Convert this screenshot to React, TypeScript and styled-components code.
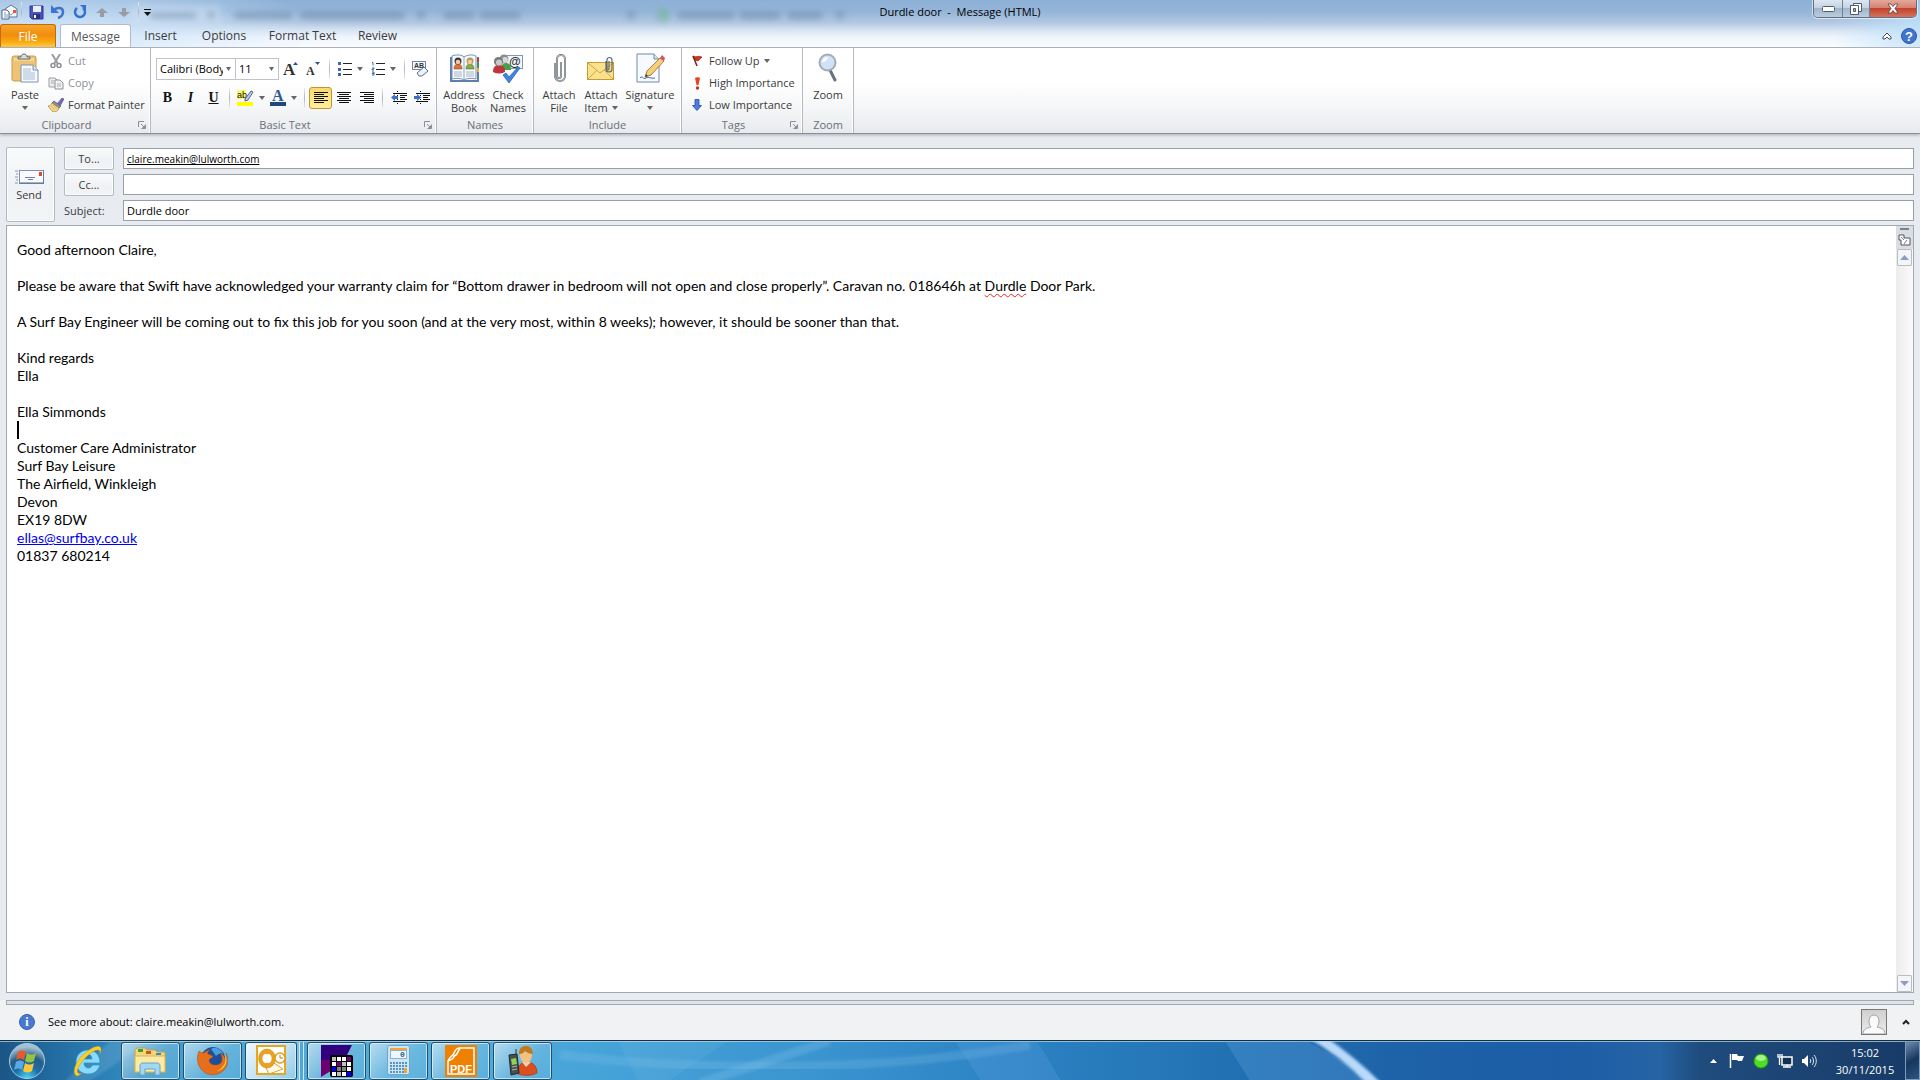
import React from "react";
import styled, { createGlobalStyle, css } from "styled-components";

const ui = `"Open Sans", "Noto Sans", sans-serif`;

const GlobalStyle = createGlobalStyle`
  *, *::before, *::after { box-sizing: border-box; }
  body { margin: 0; font-family: ${ui}; font-size: 11px; line-height: 16px; color: #3b3b3b; background: #e8ebf0; }
  button, input, select { font: inherit; color: inherit; margin: 0; }
  button { border: 0; background: none; padding: 0; }
  svg { display: block; flex: none; }
`;

const Window = styled.div`
  min-height: 100vh;
  display: flex;
  flex-direction: column;
`;

/* ---------- title bar and tabs ---------- */

const Glass = styled.header`
  position: relative;
  overflow: hidden;
  border-bottom: 1px solid #a9b0ba;
  background:
    radial-gradient(ellipse 260px 60px at 60px 30px, rgba(205, 228, 250, 0.95), rgba(205, 228, 250, 0) 100%),
    radial-gradient(ellipse 90px 60px at 100% 30px, rgba(190, 225, 250, 0.9), rgba(190, 225, 250, 0) 100%),
    linear-gradient(#8cb0d6 0, #95b5d8 12px, #b3c9e2 23px, #dbe6f3 31px, #eff5fc 37px, #fbfdff 47px);
`;

const Ghosts = styled.svg`
  position: absolute;
  left: 0;
  top: 0;
`;

const TitleRow = styled.div`
  position: relative;
  display: grid;
  grid-template-columns: 1fr auto 1fr;
  height: 24px;
`;

const QuickAccess = styled.div`
  display: flex;
  align-items: center;
  padding-left: 1px;
`;

const QuickButton = styled.button<{ $w?: number }>`
  width: ${(p) => p.$w ?? 22}px;
  height: 22px;
  display: flex;
  align-items: center;
  justify-content: center;
`;

const Title = styled.h1`
  margin: 0;
  font-size: 11px;
  line-height: 24px;
  font-weight: 400;
  color: #000;
  white-space: pre;
`;

const Caption = styled.div`
  justify-self: end;
  display: flex;
  height: 18px;
  margin-right: 3px;
  border: 1px solid #5f6f80;
  border-top: 0;
  border-radius: 0 0 5px 5px;
  overflow: hidden;
  box-shadow: 0 0 0 1px rgba(255, 255, 255, 0.6);
`;

const CaptionButton = styled.button<{ $w: number; $close?: boolean }>`
  width: ${(p) => p.$w}px;
  display: flex;
  align-items: center;
  justify-content: center;
  background: ${(p) =>
    p.$close
      ? "linear-gradient(#e3a99c 0, #d48270 8px, #c1402a 8px, #d5745f 17px)"
      : "linear-gradient(#dce7f2 0, #c3d3e3 8px, #9fb4c9 8px, #bccddd 17px)"};
  & + & { border-left: 1px solid #6f8092; }
`;

const TabRow = styled.nav`
  position: relative;
  display: flex;
  align-items: flex-end;
  height: 23px;
`;

const Tab = styled.button<{ $w: number; $kind?: "file" | "active" }>`
  width: ${(p) => p.$w}px;
  height: 23px;
  padding-top: 1px;
  font-size: 12px;
  line-height: 22px;
  border-radius: 3px 3px 0 0;
  ${(p) =>
    p.$kind === "file" &&
    css`
      color: #fff;
      margin-right: 4px;
      border: 1px solid #c76a05;
      border-bottom: 0;
      background: linear-gradient(#f7a52b, #f08c0e 45%, #f9a90f 75%, #fdc943);
    `}
  ${(p) =>
    p.$kind === "active" &&
    css`
      background: #fff;
      border: 1px solid #b6bcc5;
      border-bottom: 0;
      color: #55585c;
    `}
`;

const TabTools = styled.div`
  margin-left: auto;
  display: flex;
  align-items: center;
  gap: 9px;
  height: 23px;
  padding-right: 3px;
`;

/* ---------- ribbon ---------- */

const Ribbon = styled.section`
  display: flex;
  height: 86px;
  border-bottom: 1px solid #8b9097;
  background: linear-gradient(#fff 0, #fff 35px, #f5f6f7 60px, #e8eaee 85px);
  box-shadow: 0 1px 3px rgba(90, 98, 110, 0.45);
`;

const Group = styled.section<{ $w: number }>`
  width: ${(p) => p.$w}px;
  display: flex;
  flex-direction: column;
  border-right: 1px solid #b4b8be;
  box-shadow: inset -1px 0 #fff;
`;

const GroupBody = styled.div<{ $pad?: number }>`
  flex: 1;
  display: flex;
  padding: 2px 0 0 ${(p) => p.$pad ?? 4}px;
`;

const GroupFoot = styled.footer`
  display: flex;
  align-items: center;
  height: 17px;
  color: #6a6f77;
`;

const GroupName = styled.h2`
  flex: 1;
  margin: 0;
  font-size: 11px;
  line-height: 17px;
  font-weight: 400;
  text-align: center;
`;

const Launcher = styled.button`
  width: 17px;
  height: 14px;
  display: grid;
  place-items: center;
`;

const Big = styled.button<{ $w: number }>`
  width: ${(p) => p.$w}px;
  display: flex;
  flex-direction: column;
  align-items: center;
  padding-top: 2px;
  line-height: 13px;
  white-space: nowrap;
`;

const BigIcon = styled.span`
  display: grid;
  place-items: center;
  height: 32px;
  margin-bottom: 4px;
`;

const CaretLine = styled.span`
  display: inline-flex;
  align-items: center;
  gap: 4px;
  height: 13px;
`;

const Column = styled.div`
  display: flex;
  flex-direction: column;
`;

const Small = styled.button<{ $off?: boolean }>`
  display: flex;
  align-items: center;
  gap: 4px;
  height: 22px;
  white-space: nowrap;
  color: ${(p) => (p.$off ? "#8f9297" : "#3b3b3b")};
`;

const SmallIcon = styled.span`
  width: 16px;
  display: grid;
  place-items: center;
`;

const ToolRows = styled(Column)`
  padding-top: 7px;
  gap: 6px;
`;

const Tools = styled.div`
  display: flex;
  align-items: center;
  height: 23px;
`;

const SelectBox = styled.label<{ $w: number }>`
  position: relative;
  width: ${(p) => p.$w}px;
  height: 22px;
  border: 1px solid #c0c4ca;
  background: #fff;
  & + & { border-left: 0; }
  select {
    appearance: none;
    width: ${(p) => p.$w - 14}px;
    height: 20px;
    padding: 0 0 0 3px;
    border: 0;
    outline: 0;
    background: none;
    color: #000;
    overflow: hidden;
    text-overflow: clip;
    display: block;
  }
  svg { position: absolute; right: 4px; top: 8px; pointer-events: none; }
`;

const Tool = styled.button<{ $on?: boolean; $split?: boolean }>`
  width: ${(p) => (p.$split ? 33 : 23)}px;
  height: 22px;
  display: flex;
  align-items: center;
  justify-content: center;
  gap: 5px;
  ${(p) =>
    p.$on &&
    css`
      border: 1px solid #c2962e;
      border-radius: 3px;
      background: linear-gradient(#fbd873, #fce588 50%, #ffec9a);
    `}
`;

const Letter = styled.span<{ $italic?: boolean; $under?: boolean }>`
  font-family: "Liberation Serif", serif;
  font-size: 14px;
  font-weight: 700;
  color: #111;
  font-style: ${(p) => (p.$italic ? "italic" : "normal")};
  text-decoration: ${(p) => (p.$under ? "underline" : "none")};
`;

const Rule = styled.span<{ $gap?: number }>`
  width: 1px;
  height: 20px;
  margin: 0 ${(p) => p.$gap ?? 4}px;
  background: linear-gradient(#e8eaed, #b0b5bc 50%, #e8eaed);
`;

/* ---------- address fields ---------- */

const Envelope = styled.form`
  display: grid;
  grid-template-columns: 49px 1fr;
  column-gap: 9px;
  padding: 13px 6px 3px 6px;
`;

const raised = css`
  border: 1px solid #b4bac2;
  border-radius: 2px;
  background: linear-gradient(#f9fafc, #eff1f4 60%, #f3f4f6);
  box-shadow: inset 0 0 0 1px #fbfcfd;
`;

const Send = styled.button`
  ${raised}
  display: flex;
  flex-direction: column;
  align-items: center;
  justify-content: center;
  gap: 3px;
  padding: 3px 3px 0 0;
`;

const Fields = styled.div`
  display: flex;
  flex-direction: column;
  gap: 3px;
`;

const Field = styled.div`
  display: grid;
  grid-template-columns: 50px 1fr;
  column-gap: 9px;
  align-items: center;
  height: 23px;
`;

const FieldButton = styled.button`
  ${raised}
  height: 23px;
`;

const FieldInput = styled.input<{ $link?: boolean }>`
  width: 100%;
  height: 21px;
  padding: 0 3px;
  border: 1px solid #9a9fa7;
  outline: 0;
  background: #fff;
  color: #000;
  ${(p) =>
    p.$link &&
    css`
      font-size: 10px;
      text-decoration: underline;
    `}
`;

/* ---------- message ---------- */

const Editor = styled.main`
  flex: 1;
  display: flex;
  margin: 0 6px 7px 6px;
  border: 1px solid #a0a8b3;
  background: #fff;
`;

const Letterhead = styled.div`
  flex: 1;
  padding: 15px 10px;
  outline: 0;
  font-family: Lato, Carlito, sans-serif;
  font-size: 14px;
  line-height: 18px;
  color: #000;
  p { margin: 0; min-height: 18px; }
  a { color: #0000f0; }
`;

const Misspelt = styled.span`
  text-decoration: underline wavy #e22 1px;
  text-underline-offset: 2px;
  text-decoration-skip-ink: none;
`;

const TextCursor = styled.span`
  display: block;
  width: 2px;
  height: 18px;
  background: #000;
`;

const ScrollBar = styled.div`
  width: 17px;
  display: flex;
  flex-direction: column;
  align-items: center;
  background: linear-gradient(90deg, #ececee, #fbfbfb);
`;

const ScrollHead = styled.div`
  width: 17px;
  height: 23px;
  display: flex;
  flex-direction: column;
  align-items: center;
  gap: 3px;
  padding-top: 2px;
  background: #d9dee6;
`;

const ScrollButton = styled.button`
  width: 15px;
  height: 17px;
  display: grid;
  place-items: center;
  border: 1px solid #b9bdc3;
  border-radius: 1px;
  background: #f4f5f6;
  &:last-child { margin-top: auto; }
`;

/* ---------- people pane ---------- */

const People = styled.aside`
  background: #f1f2f4;
  padding: 0 6px;
`;

const Splitter = styled.div`
  height: 5px;
  border: 1px solid #a0a8b3;
  background: #dfe4ea;
`;

const PeopleRow = styled.div`
  display: flex;
  align-items: center;
  height: 35px;
  padding: 0 4px 2px 13px;
  gap: 13px;
  color: #000;
`;

const PeopleTools = styled.div`
  margin-left: auto;
  display: flex;
  align-items: center;
  gap: 15px;
`;

const Avatar = styled.button`
  width: 26px;
  height: 26px;
  border: 1px solid #777;
  background: linear-gradient(#cfcfcf, #ececec);
`;

/* ---------- taskbar ---------- */

const Taskbar = styled.footer`
  position: relative;
  display: flex;
  height: 40px;
  overflow: hidden;
  border-top: 1px solid #12303f;
  background: linear-gradient(90deg,
    #1a5585 0, #216a9f 50px, #2d82b8 110px, #4aa3d2 200px, #55addb 420px,
    #46a3d8 600px, #3a94cf 820px, #2d83c4 1000px, #2374b4 1200px,
    #1e62a8 1400px, #1c5da6 1560px, #2563a4 1660px, #1f4c7d 1700px, #1a3f6d 1860px, #163a66 100%);
  box-shadow: inset 0 1px rgba(190, 220, 240, 0.7);
`;

const Sheen = styled.svg`
  position: absolute;
  left: 0;
  top: 0;
`;

const Apps = styled.nav`
  position: relative;
  display: flex;
  align-items: center;
  gap: 3px;
`;

const Launch = styled.button<{ $w: number }>`
  width: ${(p) => p.$w}px;
  height: 38px;
  display: grid;
  place-items: center;
`;

const TaskButton = styled.button<{ $current?: boolean }>`
  width: 59px;
  height: 38px;
  display: grid;
  place-items: center;
  border: 1px solid #1f4f6e;
  border-radius: 3px;
  box-shadow: inset 0 0 0 1px rgba(225, 243, 252, 0.75);
  background: ${(p) =>
    p.$current
      ? "linear-gradient(135deg, #f2f9fd, #b9dff2 60%, #8ecbe9)"
      : "linear-gradient(135deg, rgba(225,242,250,.7), rgba(140,200,230,.4) 55%, rgba(100,185,225,.4))"};
`;

const Stack = styled.div`
  display: flex;
  width: 59px;
  border-right: 1px solid #cdeaf7;
  padding-right: 3px;
  ${TaskButton} { width: 52px; }
  &::after {
    content: "";
    width: 3px;
    height: 38px;
    border-right: 1px solid #cdeaf7;
    background: #7fbfe0;
  }
`;

const Tray = styled.div`
  position: relative;
  margin-left: auto;
  display: flex;
  align-items: center;
`;

const TrayButton = styled.button`
  width: 24px;
  height: 38px;
  display: grid;
  place-items: center;
`;

const Clock = styled.time`
  width: 80px;
  margin-left: 4px;
  color: #fff;
  text-align: center;
  line-height: 17px;
`;

const ShowDesktop = styled.button`
  width: 15px;
  height: 39px;
  border: 1px solid #7d9dbd;
  background: linear-gradient(150deg, #6d8cad, #16365e 50%, #2c5481);
`;

/* ---------- drawings ---------- */

const Caret = ({ w = 7, color = "#666", up = false }: { w?: number; color?: string; up?: boolean }) => (
  <svg width={w} height={w > 7 ? 5 : 4} viewBox="0 0 7 4" preserveAspectRatio="none" aria-hidden="true">
    <path d={up ? "M0 4h7L3.5 0z" : "M0 0h7L3.5 4z"} fill={color} />
  </svg>
);

const LauncherMark = () => (
  <svg width="8" height="8" viewBox="0 0 8 8" aria-hidden="true">
    <path d="M.5 6V.5H6M3.5 7.500h4v-4M3 3l3.500 3.500" fill="none" stroke="#8b8f96" />
    <path d="M4 7h3V4z" fill="#8b8f96" />
  </svg>
);

const Svg = ({ w, h, children }: { w: number; h: number; children: React.ReactNode }) => (
  <svg width={w} height={h} viewBox={`0 0 ${w} ${h}`} aria-hidden="true">{children}</svg>
);

const MailIcon = () => (
  <Svg w={17} h={16}>
    <path d="M4 5l6-4 6 4v8H4z" fill="#f3f6fa" stroke="#62758d" />
    <path d="M4 6l6 5 6-5" fill="none" stroke="#8ea0b5" />
    <rect x="12" y="6" width="3" height="3" fill="#e2592f" />
    <path d="M1 6h5l2 2v7H1z" fill="#fff" stroke="#54677e" />
    <path d="M3 9h2M3 11h4M3 13h4" stroke="#6b9bd0" />
  </Svg>
);

const SaveIcon = () => (
  <Svg w={15} h={15}>
    <path d="M1 1h13v13H3l-2-2z" fill="#4a53bd" stroke="#2f3794" />
    <rect x="4" y="1" width="8" height="6" fill="#e9eefb" />
    <path d="M4 9h7v5H4z" fill="#2c3278" />
    <rect x="5" y="10" width="2" height="3" fill="#fff" />
  </Svg>
);

const UndoIcon = () => (
  <Svg w={14} h={15}>
    <path d="M3 5c3-3 9-3 9 2 0 3-2 5-5 6" fill="none" stroke="#3d74cf" strokeWidth="2.500" />
    <path d="M0 0v8h8z" fill="#3d74cf" />
  </Svg>
);

const RedoIcon = () => (
  <Svg w={14} h={14}>
    <path d="M4 3a5 5 0 1 0 6 0" fill="none" stroke="#3470d2" strokeWidth="2.500" />
    <path d="M7 0h6v6z" fill="#3470d2" />
  </Svg>
);

const ArrowMark = ({ down }: { down?: boolean }) => (
  <Svg w={12} h={9}>
    <path d={down ? "M6 9L0 4h4V0h4v4h4z" : "M6 0l6 5H8v4H4V5H0z"} fill="#9a9ca3" />
  </Svg>
);

const PasteIcon = () => (
  <Svg w={28} h={31}>
    <rect x="1" y="3" width="24" height="25" rx="2" fill="#eec376" stroke="#c99a48" />
    <path d="M3 5h20v3H3z" fill="#f5d592" />
    <path d="M7 6V4h3c0-4 6-4 6 0h3v2z" fill="#d9dde2" stroke="#666d75" />
    <path d="M10 12h12l5 5v12H10z" fill="#f7faff" stroke="#7b92b0" />
    <path d="M22 12v5h5" fill="#dbe5f2" stroke="#7b92b0" />
    <path d="M12 16h8M12 18h8M12 20h12M12 22h12M12 24h12M12 26h12" stroke="#a9bcd5" />
  </Svg>
);

const CutIcon = () => (
  <Svg w={12} h={15}>
    <path d="M2 0l6 10M10 0L4 10" stroke="#9a9da2" strokeWidth="2" />
    <circle cx="3" cy="11.500" r="2" fill="none" stroke="#8c8f94" strokeWidth="1.500" />
    <circle cx="9" cy="11.500" r="2" fill="none" stroke="#8c8f94" strokeWidth="1.500" />
  </Svg>
);

const CopyIcon = () => (
  <Svg w={16} h={13}>
    <path d="M1 1h6l2 2v7H1z" fill="#ededed" stroke="#9a9da2" />
    <path d="M7 3h5l3 3v6H7z" fill="#f3f3f3" stroke="#8c8f94" />
    <path d="M9 7h4M9 9h4M3 4h3M3 6h3" stroke="#a9abaf" />
  </Svg>
);

const PainterIcon = () => (
  <Svg w={16} h={14}>
    <path d="M9 6l5-6 2 1-4 7z" fill="#7c6bb2" stroke="#4e4778" strokeWidth=".6" />
    <path d="M6 3l7 5-2 2-7-5z" fill="#8d8aa8" stroke="#55536e" strokeWidth=".7" />
    <path d="M4 5l7 5c-1 3-3 4-6 4L0 8c2 0 3-1 4-3z" fill="#f5dc95" stroke="#a87d1f" strokeWidth=".7" />
    <path d="M3 8l4 4M5 7l4 4" stroke="#c9a04a" strokeWidth=".7" />
  </Svg>
);

const FontSize = ({ grow }: { grow?: boolean }) => (
  <Svg w={15} h={16}>
    <text x="0" y="14" fontFamily="Liberation Serif, serif" fontWeight="700" fontSize={grow ? 17 : 12} fill="#333">A</text>
    <path d={grow ? "M10 4h5l-2.500-3z" : "M9 1h5l-2.500 3z"} fill="#2b4f91" />
  </Svg>
);

const ListIcon = ({ numbered }: { numbered?: boolean }) => (
  <Svg w={14} h={14}>
    <path d="M5 1.500h9M5 7.500h9M5 12.500h9" stroke="#222" />
    {numbered ? (
      <path d="M1 .5h1v3M1 6h2v1H1v1h2M1 10h2v3H1M1 11.500h2" fill="none" stroke="#3d66ad" />
    ) : (
      <path d="M0 0h3v3H0zM0 6h3v3H0zM0 11h3v3H0z" fill="#3d66ad" />
    )}
  </Svg>
);

const ClearIcon = () => (
  <Svg w={17} h={16}>
    <rect x=".5" y=".5" width="13" height="8" fill="#f6f9fd" stroke="#6b87ac" />
    <text x="2" y="7" fontFamily="Liberation Sans, sans-serif" fontWeight="700" fontSize="7" fill="#333">AB</text>
    <path d="M5 12l7-6 4 4-6 5H7z" fill="#eef2f8" stroke="#5b6f8c" />
  </Svg>
);

const HighlightIcon = () => (
  <Svg w={17} h={16}>
    <rect width="9" height="9" fill="#fdf76a" />
    <text x="0" y="8" fontFamily="Liberation Sans, sans-serif" fontSize="9" fill="#111">ab</text>
    <path d="M8 9l6-8 2 1-5 8-3 1z" fill="#b9cdea" stroke="#51688c" />
    <rect y="12" width="16" height="4" fill="#ffff00" />
  </Svg>
);

const FontColorIcon = () => (
  <Svg w={16} h={16}>
    <text x="2" y="11" fontFamily="Liberation Serif, serif" fontWeight="700" fontSize="16" fill="#2b579a">A</text>
    <rect y="12" width="16" height="4" fill="#1f497d" />
  </Svg>
);

const AlignIcon = ({ side }: { side: "left" | "center" | "right" }) => {
  const short = side === "left" ? "M0" : side === "center" ? "M2" : "M4";
  return (
    <Svg w={14} h={12}>
      <path d="M0 .5h14M0 4.500h14M0 8.500h14" stroke="#111" />
      <path d={`${short} 2.500h10${short} 6.500h10${short} 10.500h10`} stroke="#111" />
    </Svg>
  );
};

const IndentIcon = ({ more }: { more?: boolean }) => (
  <Svg w={16} h={14}>
    <path d="M2 2.500h14M9 4.500h7M9 6.500h5M9 8.500h7M2 10.500h12" stroke="#111" />
    <path d="M6.500 0v14" stroke="#111" strokeDasharray="1 1" />
    <path d={more ? "M0 5h3V3l4 3.500L3 10V8H0z" : "M7 5H4V3L0 6.500 4 10V8h3z"} fill="#3a70c8" />
  </Svg>
);

const Bust = ({ x, y, shirt, hair }: { x: number; y: number; shirt: string; hair: string }) => (
  <g transform={`translate(${x} ${y})`}>
    <path d="M0 12c0-4 2-5 4-5s4 1 4 5z" fill={shirt} stroke="#5a4a3a" strokeWidth=".5" />
    <circle cx="4" cy="4" r="3.500" fill={hair} />
    <circle cx="4" cy="5" r="2.300" fill="#efc9a5" />
  </g>
);

const AddressIcon = () => (
  <Svg w={31} h={29}>
    <path d="M1 3h2v23h25V3h2v25H1z" fill="#5c7fac" />
    <path d="M3 2c5-2 10-1 12 1 3-2 8-3 12-1v23c-4-1-9-1-12 1-3-2-8-2-12-1z" fill="#f6f9fd" stroke="#7591b5" />
    <path d="M15 3v23" stroke="#8fa5c2" />
    <Bust x={5} y={3} shirt="#e8722a" hair="#43352c" />
    <Bust x={17} y={3} shirt="#7cb342" hair="#b89a4e" />
    <path d="M5 18h8M5 20h8M5 22h8M17 18h8M17 20h8M17 22h8" stroke="#a8b5c7" />
    <path d="M28 4h2v4h-2z" fill="#d03030" />
    <path d="M28 9h2v4h-2z" fill="#3a9a3a" />
    <path d="M28 14h2v4h-2z" fill="#e4b02e" />
  </Svg>
);

const CheckNamesIcon = () => (
  <Svg w={32} h={29}>
    <rect x="14.500" y="1.500" width="16" height="13" fill="#f4f7fb" stroke="#8298b5" />
    <text x="17" y="12" fontFamily="Liberation Sans, sans-serif" fontSize="12" fontWeight="700" fill="#333">@</text>
    <path d="M9 16c0-5 2-7 5-7s5 2 5 7z" fill="#46a048" />
    <circle cx="12" cy="5" r="4.500" fill="#8b8d90" />
    <circle cx="13" cy="6" r="3" fill="#d5d7d9" />
    <path d="M1 18c0-6 3-7 6-7s6 1 6 7c-4 2-8 2-12 0z" fill="#c0353a" />
    <circle cx="6.500" cy="7.500" r="4.500" fill="#77797d" />
    <circle cx="7" cy="8.500" r="3" fill="#c8cacc" />
    <path d="M11 21l3-2 3 4 9-10 2 1-11 15z" fill="#3f86e0" stroke="#1f58ab" strokeWidth=".7" />
  </Svg>
);

const clipPath = "M8 9v14a2 2 0 0 1-4 0V6a4 4 0 0 1 8 0v17a5 5 0 0 1-10 0V10";

const ClipIcon = () => (
  <Svg w={13} h={30}>
    <path d={clipPath} fill="none" stroke="#6d7278" strokeWidth="2" />
    <path d={clipPath} fill="none" stroke="#c9cdd1" strokeWidth=".8" />
  </Svg>
);

const AttachItemIcon = () => (
  <Svg w={28} h={26}>
    <rect x=".5" y="7.500" width="26" height="17" fill="#fae28c" stroke="#c69b31" />
    <path d="M1 8l12 10L26 8M1 24l9-9M26 24l-9-9" fill="none" stroke="#d4a742" />
    <path d="M22 6v8a1 1 0 0 1-2 0V5a2 2 0 0 1 5 0v9a3 3 0 0 1-6 0V6" fill="none" stroke="#5d6875" strokeWidth="1.200" />
  </Svg>
);

const SignatureIcon = () => (
  <Svg w={29} h={30}>
    <path d="M1 1h17l5 5v23H1z" fill="#f7faff" stroke="#6e88ab" />
    <path d="M18 1v5h5" fill="#d8e3f1" stroke="#6e88ab" />
    <path d="M4 25c3-3 3 2 6 0s4 1 9 0" fill="none" stroke="#3766b4" />
    <path d="M9 24l2-6L24 5l4 3-13 14z" fill="#f6cf7a" stroke="#94661c" strokeWidth=".8" />
    <path d="M9 24l1-3 2 2z" fill="#4a4038" />
    <path d="M24 5l2-3 3 3-1 3z" fill="#d5526a" />
  </Svg>
);

const FlagIcon = () => (
  <Svg w={11} h={12}>
    <path d="M1 1c3 2 5-1 9 1L6 6 3 5z" fill="#d6301d" stroke="#8f1c10" strokeWidth=".6" />
    <path d="M1 1l4 10" stroke="#7a2018" strokeWidth="1.500" />
  </Svg>
);

const HighIcon = () => (
  <Svg w={7} h={13}>
    <path d="M1 1c1-1 4-1 5 0L4.500 8h-2z" fill="#e8431f" />
    <circle cx="3.500" cy="11" r="1.700" fill="#c9301a" />
  </Svg>
);

const LowIcon = () => (
  <Svg w={10} h={12}>
    <path d="M3 .5h4v6h2.500L5 11.500.5 6.500H3z" fill="#4c7de0" stroke="#2449a3" strokeWidth=".8" />
  </Svg>
);

const ZoomIcon = () => (
  <Svg w={20} h={30}>
    <path d="M12 17l5 10" stroke="#6d7278" strokeWidth="3" strokeLinecap="round" />
    <circle cx="9.500" cy="9.500" r="8" fill="#cfe2f6" stroke="#a3abb5" strokeWidth="2" />
    <path d="M4 9a6 6 0 0 1 6-5c-1 4-3 5-6 5z" fill="#fff" />
  </Svg>
);

const SendIcon = () => (
  <Svg w={29} h={14}>
    <path d="M0 1h3M1 4h2M0 7h3M1 10h2M0 13h3" stroke="#8595ae" />
    <rect x="4.500" y=".5" width="24" height="13" fill="#f8fafd" stroke="#7d92b3" />
    <path d="M5 13h24V1" fill="none" stroke="#4e6890" />
    <path d="M10 7.500h10M13 9.500h5" stroke="#6f82a3" />
    <rect x="24" y="2" width="3" height="4" fill="#dd4a2a" />
  </Svg>
);

const Orb = () => (
  <Svg w={38} h={38}>
    <defs>
      <radialGradient id="orb" cx=".5" cy="1" r=".9">
        <stop offset="0" stopColor="#4fd8ff" />
        <stop offset=".4" stopColor="#1c6ea8" />
        <stop offset=".7" stopColor="#255d86" />
        <stop offset="1" stopColor="#a5c0d2" />
      </radialGradient>
    </defs>
    <circle cx="19" cy="19" r="17.500" fill="url(#orb)" stroke="#a9cde3" />
    <path d="M10 10c3-2 5-2 8 0l-2 8c-3-2-5-2-8 0z" fill="#e8592b" />
    <path d="M19 11c3 2 6 2 9 0l-2 8c-3 2-6 2-9 0z" fill="#94c444" />
    <path d="M8 20c3-2 5-2 8 0l-2 8c-3-2-5-2-8 0z" fill="#5aa8e6" />
    <path d="M17 21c3 2 6 2 9 0l-2 8c-3 2-6 2-9 0z" fill="#fbc734" />
  </Svg>
);

const IeIcon = () => (
  <Svg w={32} h={32}>
    <path d="M28 20c-2 6-6 9-12 9C9 29 4 24 4 17S9 5 16 5s12 5 12 13H12c0 3 2 5 4.500 5 2 0 3-1 4-3zM12 14h8c0-3-2-4.500-4-4.500S12 11 12 14z" fill="#8adbfa" stroke="#2a92ce" strokeWidth=".7" />
    <path d="M5 31C-1 29 3 16 13 8S29 0 29 4c0 2 0 3-1 5 1-4-2-6-9-1S3 24 6 28c1 1 3 1 4 0-2 2-4 3-5 3z" fill="#f6cf2b" stroke="#c48c12" strokeWidth=".4" />
  </Svg>
);

const FolderIcon = () => (
  <Svg w={33} h={30}>
    <path d="M1 4l2-2h8l2 2h8l2 2h8v20H1z" fill="#f3d878" stroke="#c5a243" />
    <path d="M4 3h5v3H4z" fill="#3a9b4e" />
    <path d="M12 5h5v3h-5z" fill="#d45030" />
    <path d="M22 7h5v2h-5z" fill="#3a86cf" />
    <path d="M1 10h30v16H1z" fill="#fbeaa4" stroke="#d2b459" />
    <path d="M6 29V20c0-2 1-3 3-3h14c2 0 3 1 3 3v9h-5v-6H11v6z" fill="#a4d8f2" stroke="#5da6cf" />
  </Svg>
);

const FoxIcon = () => (
  <Svg w={31} h={32}>
    <circle cx="16" cy="14" r="12" fill="#1d4f9c" />
    <path d="M14 4c4-3 10 0 12 5-3-1-5 0-7 2z" fill="#4aa0dd" />
    <path d="M2 6c1 1 3 2 5 2 2-2 4-3 6-3-2 1-3 3-2 4l5 2c0 2-3 2-4 4 0 2 2 5 6 5s7-2 7-5c0-3 0-5-2-7 5 2 6 7 5 11 2-3 2-8 1-11 3 6 2 14-3 18-6 5-15 5-20 0C-1 20 0 11 2 6z" fill="#e66f1c" stroke="#b6450d" strokeWidth=".5" />
    <path d="M28 9c2 7-1 14-8 17 8-1 12-10 8-17z" fill="#ffd23f" />
  </Svg>
);

const OutlookIcon = () => (
  <Svg w={30} h={31}>
    <rect x="1" y="1" width="28" height="28" fill="#fff" stroke="#e8a51e" strokeWidth="2" />
    <path d="M9 21l9-3 9 6-14 5z" fill="#fffbe8" stroke="#dba12d" />
    <path fillRule="evenodd" d="M11 4a8 9 0 1 0 0 19 8 9 0 1 0 0-19zm0 5a3.500 5 0 1 1 0 9 3.500 5 0 1 1 0-9z" fill="#eda21c" stroke="#c57b0a" strokeWidth=".5" />
    <circle cx="24" cy="13" r="5" fill="#fff" stroke="#e09b1f" strokeWidth="1.500" />
    <path d="M24 10v3h3" fill="none" stroke="#c57b0a" />
  </Svg>
);

const cells = ["#c0c0c0", "#fff", "#fff", "#800080", "#fff", "#800080", "#c0c0c0", "#fff", "#00f", "#808080", "#808080", "#fff", "#fff", "#c0c0c0", "#fff", "#00f"];

const GridIcon = () => (
  <Svg w={32} h={32}>
    <path d="M0 0h31L22 18H0z" fill="#32007c" />
    <path d="M0 15h13v9L0 32z" fill="#6d0070" />
    <rect x="9" y="10" width="23" height="22" rx="2" fill="#000" />
    {cells.map((fill, i) => (
      <rect key={i} x={11 + (i % 4) * 5} y={12 + Math.floor(i / 4) * 5} width="4" height="4" fill={fill} />
    ))}
  </Svg>
);

const CalcIcon = () => (
  <Svg w={24} h={31}>
    <rect x=".5" y=".5" width="22" height="29" rx="2" fill="#cde6f5" stroke="#6fa6c9" />
    <rect x="3" y="3" width="17" height="2" fill="#f2a43a" />
    <rect x="3.500" y="5.500" width="16" height="8" fill="#eef7fc" stroke="#8ab4cf" />
    <text x="13" y="12" fontFamily="Liberation Mono, monospace" fontWeight="700" fontSize="8" fill="#2b5b83">0</text>
    {[0, 1, 2, 3].map((r) => (
      <path key={r} d={`M3 ${18 + r * 3}h17`} stroke="#5b93bb" strokeWidth="2" strokeDasharray="2 1" />
    ))}
    <rect x="17" y="23" width="3" height="5" fill="#f2a43a" />
  </Svg>
);

const PdfIcon = () => (
  <Svg w={32} h={32}>
    <rect width="32" height="32" rx="1" fill="#f08000" />
    <path d="M3 29V16C6 9 8 12 9 8c2-5 4-5 6-5h14v26z" fill="none" stroke="#fff" strokeWidth="1.500" />
    <path d="M3 16c4-2 6-2 6-5 3 0 3-3 6-8" fill="none" stroke="#fff" strokeWidth="1.500" />
    <text x="5" y="28" fontFamily="Liberation Sans, sans-serif" fontWeight="700" fontSize="11" fill="#fff">PDF</text>
  </Svg>
);

const PhoneIcon = () => (
  <Svg w={31} h={31}>
    <path d="M11 29c-1-8 3-12 9-12s10 4 10 11c-5 3-13 3-19 1z" fill="#dc4f1e" stroke="#9e3009" strokeWidth=".6" />
    <path d="M15 17l4 5 5-5z" fill="#f5d7b5" />
    <ellipse cx="19" cy="10" rx="6" ry="8" fill="#f4c084" />
    <path d="M12 9c0-6 3-8 7-8s7 3 7 8c-3 0-6-1-8-3-1 2-3 3-6 3z" fill="#c07a1a" />
    <path d="M2 10l8-1 2 19-8 2z" fill="#46504f" stroke="#20282a" />
    <path d="M4 14l5-1 1 6-5 1z" fill="#8fd24c" />
    <path d="M5 22l5-1M5 25l5-1" stroke="#aab4b4" />
    <path d="M9 4v5" stroke="#333" />
  </Svg>
);

const TrayFlag = () => (
  <Svg w={16} h={15}>
    <path d="M1.500 1v14" stroke="#fff" strokeWidth="1.500" />
    <path d="M3 1h5l1 2h6l-2 5H9L8 7H3z" fill="#fff" />
  </Svg>
);

const TrayNet = () => (
  <Svg w={16} h={15}>
    <rect x="5" y="4" width="10" height="8" fill="#12304f" stroke="#fff" strokeWidth="1.500" />
    <path d="M6 14h8M10 12v2M2.500 5v7M1 1v3h4V1M3 1v2" stroke="#fff" strokeWidth="1.300" fill="none" />
  </Svg>
);

const TraySound = () => (
  <Svg w={16} h={14}>
    <path d="M1 5h2l4-4v12L3 9H1z" fill="#fff" />
    <path d="M9 5c1 1 1 3 0 4M11 3c2 2 2 6 0 8M13 1c3 3 3 9 0 12" fill="none" stroke="#dce8f3" />
  </Svg>
);

const Green = () => (
  <Svg w={16} h={16}>
    <circle cx="8" cy="8" r="7" fill="#4fdc26" stroke="#2d9d12" />
    <ellipse cx="8" cy="5" rx="5" ry="3" fill="#a4f58a" />
  </Svg>
);

const ghosts = [
  [150, 46], [234, 58], [300, 104], [444, 30], [480, 40], [678, 56], [740, 40], [788, 34],
];

/* ---------- page ---------- */

const Foot = ({ name, launcher }: { name: string; launcher?: boolean }) => (
  <GroupFoot>
    <GroupName>{name}</GroupName>
    {launcher && <Launcher aria-label={`${name} options`}><LauncherMark /></Launcher>}
  </GroupFoot>
);

export default function App() {
  return (
    <Window>
      <GlobalStyle />
      <Glass>
        <Ghosts width="1920" height="47" aria-hidden="true">
          <defs><filter id="soft" x="-20%" y="-100%" width="140%" height="300%"><feGaussianBlur stdDeviation="3" /></filter></defs>
          <g filter="url(#soft)">
            <path d="M130 6h90v18h-90z" fill="#cfe2f5" opacity=".5" />
            {ghosts.map(([x, w]) => <rect key={x} x={x} y="12" width={w} height="7" fill="#4e6d8e" opacity=".38" />)}
            <circle cx="663" cy="15" r="7" fill="#6fb59b" opacity=".6" />
            {[211, 421, 631, 840].map((x) => <circle key={x} cx={x} cy="15" r="4" fill="#4e6d8e" opacity=".4" />)}
          </g>
        </Ghosts>
        <TitleRow>
          <QuickAccess>
            <MailIcon />
            <Rule $gap={3} />
            <QuickButton aria-label="Save"><SaveIcon /></QuickButton>
            <QuickButton aria-label="Undo"><UndoIcon /></QuickButton>
            <QuickButton aria-label="Redo"><RedoIcon /></QuickButton>
            <QuickButton aria-label="Previous item"><ArrowMark /></QuickButton>
            <QuickButton aria-label="Next item"><ArrowMark down /></QuickButton>
            <Rule $gap={3} />
            <QuickButton $w={11} aria-label="Customise toolbar">
              <Svg w={7} h={7}><path d="M0 .5h7" stroke="#111" /><path d="M0 3h7L3.500 7z" fill="#111" /></Svg>
            </QuickButton>
          </QuickAccess>
          <Title>{"Durdle door  -  Message (HTML)"}</Title>
          <Caption>
            <CaptionButton $w={28} aria-label="Minimise">
              <Svg w={13} h={6}><rect x=".5" y=".5" width="12" height="5" rx="1" fill="#fff" stroke="#4d5d6e" /></Svg>
            </CaptionButton>
            <CaptionButton $w={27} aria-label="Restore">
              <Svg w={12} h={12}>
                <path d="M3.500 .5h8v8h-8z" fill="#fff" stroke="#4d5d6e" />
                <path d="M.5 2.500h8v9h-8z" fill="#fff" stroke="#4d5d6e" />
                <path d="M3.500 5.500h2v3h-2z" fill="#9fb4c9" stroke="#4d5d6e" />
              </Svg>
            </CaptionButton>
            <CaptionButton $w={47} $close aria-label="Close">
              <Svg w={12} h={11}>
                <path d="M1 1h3l2 2.500L8 1h3L8 5.500l3 4.500H8L6 7.500 4 10H1l3-4.500z" fill="#fff" stroke="#5a3a3c" strokeWidth=".8" />
              </Svg>
            </CaptionButton>
          </Caption>
        </TitleRow>
        <TabRow>
          <Tab $w={56} $kind="file">File</Tab>
          <Tab $w={71} $kind="active">Message</Tab>
          <Tab $w={59}>Insert</Tab>
          <Tab $w={68}>Options</Tab>
          <Tab $w={89}>Format Text</Tab>
          <Tab $w={61}>Review</Tab>
          <TabTools>
            <button aria-label="Minimise the ribbon">
              <Svg w={10} h={8}><path d="M1 5l4-4 4 4v2H7L5 5 3 7H1z" fill="#fff" stroke="#444b54" /></Svg>
            </button>
            <button aria-label="Help">
              <Svg w={16} h={16}>
                <circle cx="8" cy="8" r="7.500" fill="#3f74cf" stroke="#2c56a5" />
                <text x="8" y="13" textAnchor="middle" fontFamily="Liberation Sans, sans-serif" fontWeight="700" fontSize="13" fill="#fff">?</text>
              </Svg>
            </button>
          </TabTools>
        </TabRow>
      </Glass>

      <Ribbon>
        <Group $w={151}>
          <GroupBody $pad={2}>
            <Big $w={46}><BigIcon><PasteIcon /></BigIcon>Paste<CaretLine><Caret w={6} /></CaretLine></Big>
            <Column>
              <Small $off><SmallIcon><CutIcon /></SmallIcon>Cut</Small>
              <Small $off><SmallIcon><CopyIcon /></SmallIcon>Copy</Small>
              <Small><SmallIcon><PainterIcon /></SmallIcon>Format Painter</Small>
            </Column>
          </GroupBody>
          <Foot name="Clipboard" launcher />
        </Group>

        <Group $w={286}>
          <GroupBody $pad={5}>
            <ToolRows>
              <Tools>
                <SelectBox $w={80}>
                  <select aria-label="Font" defaultValue="Calibri (Body)"><option>Calibri (Body)</option></select>
                  <Caret w={5} />
                </SelectBox>
                <SelectBox $w={43}>
                  <select aria-label="Font size" defaultValue="11"><option>11</option></select>
                  <Caret w={5} />
                </SelectBox>
                <Tool aria-label="Grow font"><FontSize grow /></Tool>
                <Tool aria-label="Shrink font"><FontSize /></Tool>
                <Rule />
                <Tool $split aria-label="Bullets"><ListIcon /><Caret w={6} /></Tool>
                <Tool $split aria-label="Numbering"><ListIcon numbered /><Caret w={6} /></Tool>
                <Rule />
                <Tool aria-label="Clear formatting"><ClearIcon /></Tool>
              </Tools>
              <Tools>
                <Tool aria-label="Bold"><Letter>B</Letter></Tool>
                <Tool aria-label="Italic"><Letter $italic>I</Letter></Tool>
                <Tool aria-label="Underline"><Letter $under>U</Letter></Tool>
                <Rule />
                <Tool $split aria-label="Highlight colour"><HighlightIcon /><Caret w={6} /></Tool>
                <Tool $split aria-label="Font colour"><FontColorIcon /><Caret w={6} /></Tool>
                <Rule />
                <Tool $on aria-label="Align left"><AlignIcon side="left" /></Tool>
                <Tool aria-label="Centre"><AlignIcon side="center" /></Tool>
                <Tool aria-label="Align right"><AlignIcon side="right" /></Tool>
                <Rule />
                <Tool aria-label="Decrease indent"><IndentIcon /></Tool>
                <Tool aria-label="Increase indent"><IndentIcon more /></Tool>
              </Tools>
            </ToolRows>
          </GroupBody>
          <Foot name="Basic Text" launcher />
        </Group>

        <Group $w={97}>
          <GroupBody>
            <Big $w={46}><BigIcon><AddressIcon /></BigIcon>Address<br />Book</Big>
            <Big $w={42}><BigIcon><CheckNamesIcon /></BigIcon>Check<br />Names</Big>
          </GroupBody>
          <Foot name="Names" />
        </Group>

        <Group $w={148}>
          <GroupBody>
            <Big $w={42}><BigIcon><ClipIcon /></BigIcon>Attach<br />File</Big>
            <Big $w={42}><BigIcon><AttachItemIcon /></BigIcon>Attach<CaretLine>Item<Caret w={6} /></CaretLine></Big>
            <Big $w={56}><BigIcon><SignatureIcon /></BigIcon>Signature<CaretLine><Caret w={6} /></CaretLine></Big>
          </GroupBody>
          <Foot name="Include" />
        </Group>

        <Group $w={121}>
          <GroupBody $pad={7}>
            <Column>
              <Small><SmallIcon><FlagIcon /></SmallIcon>Follow Up<Caret w={6} /></Small>
              <Small><SmallIcon><HighIcon /></SmallIcon>High Importance</Small>
              <Small><SmallIcon><LowIcon /></SmallIcon>Low Importance</Small>
            </Column>
          </GroupBody>
          <Foot name="Tags" launcher />
        </Group>

        <Group $w={51}>
          <GroupBody>
            <Big $w={42}><BigIcon><ZoomIcon /></BigIcon>Zoom</Big>
          </GroupBody>
          <Foot name="Zoom" />
        </Group>
      </Ribbon>

      <Envelope onSubmit={(e) => e.preventDefault()}>
        <Send type="submit"><SendIcon />Send</Send>
        <Fields>
          <Field>
            <FieldButton type="button">To...</FieldButton>
            <FieldInput $link aria-label="To" defaultValue="claire.meakin@lulworth.com" spellCheck={false} />
          </Field>
          <Field>
            <FieldButton type="button">Cc...</FieldButton>
            <FieldInput aria-label="Cc" />
          </Field>
          <Field>
            <label htmlFor="subject">Subject:</label>
            <FieldInput id="subject" defaultValue="Durdle door" spellCheck={false} />
          </Field>
        </Fields>
      </Envelope>

      <Editor>
        <Letterhead role="textbox" aria-label="Message" aria-multiline="true" contentEditable suppressContentEditableWarning spellCheck={false}>
          <p>Good afternoon Claire,</p>
          <p />
          <p>
            Please be aware that Swift have acknowledged your warranty claim for “Bottom drawer in bedroom will not open and
            close properly”. Caravan no. 018646h at <Misspelt>Durdle</Misspelt> Door Park.
          </p>
          <p />
          <p>A Surf Bay Engineer will be coming out to fix this job for you soon (and at the very most, within 8 weeks); however, it should be sooner than that.</p>
          <p />
          <p>Kind regards</p>
          <p>Ella</p>
          <p />
          <p>Ella Simmonds</p>
          <p><TextCursor /></p>
          <p>Customer Care Administrator</p>
          <p>Surf Bay Leisure</p>
          <p>The Airfield, Winkleigh</p>
          <p>Devon</p>
          <p>EX19 8DW</p>
          <p><a href="mailto:ellas@surfbay.co.uk">ellas@surfbay.co.uk</a></p>
          <p>01837 680214</p>
        </Letterhead>
        <ScrollBar>
          <ScrollHead>
            <Svg w={9} h={2}><rect width="9" height="2" fill="#7b818a" /></Svg>
            <Svg w={13} h={13}>
              <path d="M1 2h5v3h6v7H3V7H1z" fill="#fff" stroke="#555" />
              <path d="M3 4l3 3M9 7l-3 4" stroke="#8a6f80" />
            </Svg>
          </ScrollHead>
          <ScrollButton aria-label="Scroll up"><Caret w={9} color="#8f9cc4" up /></ScrollButton>
          <ScrollButton aria-label="Scroll down"><Caret w={9} color="#8f9cc4" /></ScrollButton>
        </ScrollBar>
      </Editor>

      <People>
        <Splitter />
        <PeopleRow>
          <Svg w={16} h={16}>
            <circle cx="8" cy="8" r="7.500" fill="#4a78d0" stroke="#3a62b4" />
            <text x="8" y="12" textAnchor="middle" fontFamily="Liberation Serif, serif" fontWeight="700" fontSize="12" fill="#fff">i</text>
          </Svg>
          <span>See more about: claire.meakin@lulworth.com.</span>
          <PeopleTools>
            <Avatar aria-label="Contact picture">
              <Svg w={24} h={24}>
                <path d="M1 24c0-5 4-6 8-7-3-3-3-12 3-12s6 9 3 12c4 1 8 2 8 7z" fill="#fafafa" stroke="#a3a3a3" />
              </Svg>
            </Avatar>
            <button aria-label="Expand people pane">
              <Svg w={8} h={6}><path d="M1 5l3-3 3 3" fill="none" stroke="#222" strokeWidth="2" /></Svg>
            </button>
          </PeopleTools>
        </PeopleRow>
      </People>

      <Taskbar>
        <Sheen width="1920" height="40" aria-hidden="true">
          <defs><filter id="haze"><feGaussianBlur stdDeviation="1.500" /></filter></defs>
          <path d="M618 0h110l-60 40h-30z" fill="#fff" opacity=".05" />
          <path d="M560 14c120 14 300 20 470-10" fill="none" stroke="#8fcaf0" strokeWidth="9" opacity=".22" filter="url(#haze)" />
          <path d="M830 0L700 42" stroke="#8fcaf0" strokeWidth="9" opacity=".25" filter="url(#haze)" />
          <path d="M955 0h82l24 40h-80z" fill="#6db0ea" opacity=".2" />
          <path d="M1225 0h82l70 40h-127z" fill="#6db0ea" opacity=".25" />
          <path d="M1303-6l20 0q32 22 58 48h-15q-26-28-63-48z" fill="#b9dafa" filter="url(#haze)" />
          <path d="M65 40L110 0h40l-60 40z" fill="#9fd0ec" opacity=".2" filter="url(#haze)" />
        </Sheen>
        <Apps>
          <Launch $w={54} aria-label="Start"><Orb /></Launch>
          <Launch $w={61} aria-label="Internet Explorer"><IeIcon /></Launch>
          <TaskButton aria-label="Windows Explorer"><FolderIcon /></TaskButton>
          <TaskButton aria-label="Firefox"><FoxIcon /></TaskButton>
          <Stack><TaskButton $current aria-label="Outlook"><OutlookIcon /></TaskButton></Stack>
          <TaskButton aria-label="Service desk"><GridIcon /></TaskButton>
          <TaskButton aria-label="Calculator"><CalcIcon /></TaskButton>
          <TaskButton aria-label="PDF reader"><PdfIcon /></TaskButton>
          <TaskButton aria-label="Phone"><PhoneIcon /></TaskButton>
        </Apps>
        <Tray>
          <TrayButton aria-label="Show hidden icons"><Caret w={7} color="#fff" up /></TrayButton>
          <TrayButton aria-label="Action centre"><TrayFlag /></TrayButton>
          <TrayButton aria-label="Status"><Green /></TrayButton>
          <TrayButton aria-label="Network"><TrayNet /></TrayButton>
          <TrayButton aria-label="Volume"><TraySound /></TrayButton>
          <Clock>15:02<br />30/11/2015</Clock>
          <ShowDesktop aria-label="Show desktop" />
        </Tray>
      </Taskbar>
    </Window>
  );
}
